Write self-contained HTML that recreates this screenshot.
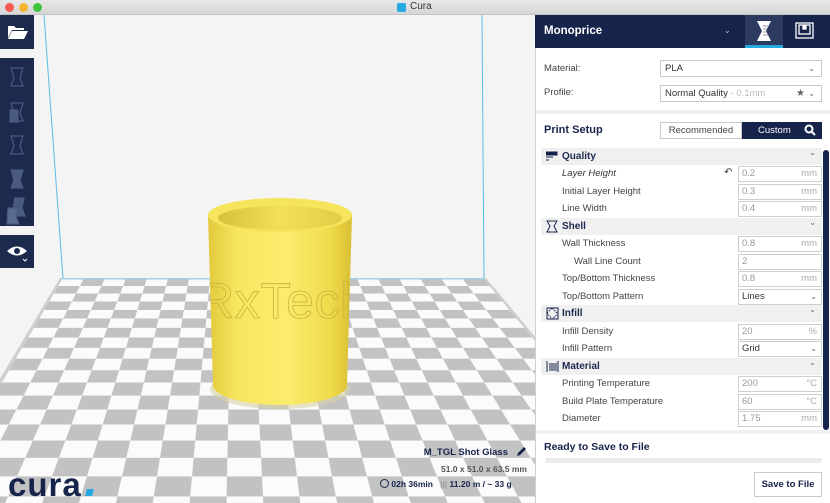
<!DOCTYPE html>
<html><head><meta charset="utf-8">
<style>
*{margin:0;padding:0;box-sizing:border-box}
html,body{width:830px;height:503px;overflow:hidden}
body{background:#f3f3f3;font-family:"Liberation Sans",sans-serif;position:relative;color:#3a3a3a}
.abs{position:absolute}
#title{left:0;top:0;width:830px;height:15px;background:linear-gradient(#e8e8e8,#d6d6d6);border-bottom:1px solid #c4c4c4}
.dot{position:absolute;top:3px;width:9px;height:9px;border-radius:50%}
#vp{left:0;top:15px;width:535px;height:488px;overflow:hidden;background:#f4f4f4;perspective:900px;perspective-origin:237px -33px}
#floor{position:absolute;left:60px;top:263px;width:426px;height:420px;transform-origin:50% 0;transform:rotateX(89.9deg);background:#cfcfcf;padding:3px}
#floor div{width:100%;height:100%;background:repeating-conic-gradient(#c2c2c2 0 25%,#fbfbfb 0 50%);background-size:42px 42px}
.tb{position:absolute;left:0;width:34px;background:#1c2a4d}
#panel{left:535px;top:15px;width:295px;height:488px;background:#fff;border-left:1px solid #d0d0d0}
.hdr{left:535px;top:15px;width:295px;height:33px;background:#16234a}
.lbl{position:absolute;font-size:9.5px;color:#444}
.box{position:absolute;border:1px solid #c9c9c9;background:#fff;font-size:9.5px;color:#333;padding-left:4px;line-height:15px}
.chev{position:absolute;right:6px;top:0;font-size:8px;color:#666}
.row{position:absolute;left:541px;width:281px;height:17px}
.sec{background:#f0f0f0}
.sec b{position:absolute;left:21px;top:3px;font-size:10px;color:#1c2a4d}
.set{position:absolute;left:21px;top:3px;font-size:9.5px;color:#444}
.in{position:absolute;left:197px;top:1px;width:84px;height:16px;border:1px solid #cfcfcf;background:#fff;font-size:9.5px;color:#999;padding-left:3px;line-height:14px}
.in span{position:absolute;right:4px;top:0;color:#aaa}
.in.dk{color:#333}
</style></head><body>
<div id="title" class="abs">
<div class="dot" style="left:5px;background:#f45a53"></div>
<div class="dot" style="left:19px;background:#f6b630"></div>
<div class="dot" style="left:33px;background:#3ec43c"></div>
<div class="abs" style="left:397px;top:3px;width:9px;height:9px;border-radius:2px;background:#26a9e0"></div>
<div class="abs" style="left:410px;top:1px;font-size:10px;color:#333">Cura</div>
</div>

<div id="vp" class="abs">
<div id="floor"><div></div></div>
<svg class="abs" style="left:0;top:0" width="535" height="488">
<line x1="44" y1="0" x2="63" y2="264" stroke="#5bbde4" stroke-width="1"/>
<line x1="482" y1="0" x2="484" y2="264" stroke="#5bbde4" stroke-width="1"/>
<line x1="63" y1="264" x2="484" y2="264" stroke="#8fd0ea" stroke-width="1"/>
<defs>
<linearGradient id="cg" x1="0" x2="1" y1="0" y2="0">
<stop offset="0" stop-color="#e3c93a"/><stop offset="0.2" stop-color="#f7e660"/><stop offset="0.55" stop-color="#fbec6c"/><stop offset="0.85" stop-color="#f0db4c"/><stop offset="1" stop-color="#d9bf32"/>
</linearGradient>
<linearGradient id="ig" x1="0" x2="1"><stop offset="0" stop-color="#d8c03a"/><stop offset="0.5" stop-color="#f3e05a"/><stop offset="1" stop-color="#e3cd45"/></linearGradient>
<clipPath id="cc"><path d="M208 200 L213 370 A67 20 0 0 0 347 370 L352 200 Z"/></clipPath>
</defs>
<ellipse cx="280" cy="374" rx="70" ry="20" fill="#d9d1a8" opacity="0.6"/>
<path d="M208 200 L213 370 A67 20 0 0 0 347 370 L352 200 Z" fill="url(#cg)"/>
<ellipse cx="280" cy="200" rx="72" ry="17" fill="#f6e45c"/>
<ellipse cx="280" cy="203" rx="62" ry="12" fill="url(#ig)"/>
<g clip-path="url(#cc)"><text x="198" y="303" font-family="Liberation Sans" font-size="50" fill="none" stroke="#c9b23c" stroke-width="0.8" textLength="170">RxTech</text></g>
</svg>
<div class="abs" style="left:8px;top:453px;font-size:33px;font-weight:bold;color:#16234a;line-height:33px;letter-spacing:1px">cura</div>
<div class="abs" style="left:86px;top:474px;width:7px;height:7px;background:#26a9e0;transform:skewX(-15deg)"></div>
<div class="abs" style="right:27px;top:432px;font-size:9.5px;font-weight:bold;color:#16234a">M_TGL Shot Glass</div>
<svg class="abs" style="left:515px;top:431px" width="12" height="12"><path d="M2 10 L3 7 L9 1 L11 3 L5 9 Z" fill="#16234a"/></svg>
<div class="abs" style="right:8px;top:449px;font-size:8.5px;font-weight:bold;color:#555">51.0 x 51.0 x 63.5 mm</div>
<div class="abs" style="left:380px;top:464px;font-size:8.5px;font-weight:bold;color:#16234a;white-space:nowrap">
<span style="display:inline-block;width:9px;height:9px;border:1px solid #16234a;border-radius:50%;vertical-align:-1px"></span> 02h 36min &nbsp; <span style="color:#999">|||</span> 11.20 m / ~ 33 g</div>
</div>

<div class="tb" style="top:15px;height:34px"></div>
<svg class="abs" style="left:7px;top:24px" width="22" height="16"><path d="M1 2 H7 L9 4 H17 V6 H5 L1 14 Z" fill="#fff"/><path d="M5 7 H21 L17 15 H1 Z" fill="#fff"/></svg>
<div class="tb" style="top:58px;height:168px"></div>
<svg class="abs" style="left:0;top:58px" width="34" height="168" fill="none" stroke="#4a5a80" stroke-width="1.2">
<path d="M11 10 H23 L20 20 L23 28 H11 L14 20 Z"/>
<path d="M11 45 H23 L20 55 L23 63 H11 L14 55 Z"/><rect x="10" y="52" width="8" height="12" fill="#4a5a80"/>
<path d="M11 78 H23 L20 88 L23 96 H11 L14 88 Z"/>
<path d="M11 112 H23 L20 122 L23 130 H11 L14 122 Z" fill="#4a5a80"/>
<path d="M14 140 H24 L22 150 L25 158 H12" fill="#4a5a80"/><path d="M8 150 H18 L16 158 L19 166 H7 Z" fill="#5a6a90"/>
</svg>
<div class="tb" style="top:235px;height:33px"></div>
<svg class="abs" style="left:6px;top:244px" width="24" height="20"><path d="M1 7 Q11 -2 21 7 Q11 16 1 7 Z" fill="#fff"/><circle cx="11" cy="7" r="3" fill="#1c2a4d"/><path d="M17 15 L19 17 L21 15" stroke="#fff" fill="none"/></svg>

<div id="panel" class="abs"></div>
<div class="hdr abs"></div>
<div class="abs" style="left:544px;top:25px;font-size:11.5px;font-weight:bold;color:#fff">Monoprice</div>
<div class="abs" style="left:724px;top:26px;font-size:8px;color:#ccc">⌄</div>
<div class="abs" style="left:745px;top:15px;width:38px;height:33px;background:#2e3b60;border-bottom:3px solid #26a9e0"></div>
<svg class="abs" style="left:755px;top:20px" width="18" height="22"><path d="M2 1 H16 L11 11 L16 21 H2 L7 11 Z" fill="#fff"/><path d="M8 6 H13 M8 9 H12 M8 12 H12 M8 15 H13" stroke="#999" stroke-width="1"/></svg>
<svg class="abs" style="left:794px;top:21px" width="22" height="20" fill="none" stroke="#fff" stroke-width="1.3"><rect x="2" y="2" width="17" height="15"/><rect x="5" y="4" width="11" height="9"/><rect x="9" y="5" width="3" height="3" fill="#fff"/></svg>

<div class="lbl" style="left:544px;top:63px">Material:</div>
<div class="box" style="left:660px;top:60px;width:162px;height:17px">PLA<span class="chev">⌄</span></div>
<div class="lbl" style="left:544px;top:87px">Profile:</div>
<div class="box" style="left:660px;top:85px;width:162px;height:17px">Normal Quality <span style="color:#bbb">- 0.1mm</span><span class="chev" style="right:16px;font-size:10px">★</span><span class="chev">⌄</span></div>
<div class="abs" style="left:536px;top:110px;width:294px;height:4px;background:#f0f0f0"></div>
<div class="abs" style="left:544px;top:124px;font-size:11px;font-weight:bold;color:#16234a">Print Setup</div>
<div class="abs" style="left:660px;top:122px;width:82px;height:17px;border:1px solid #c9c9c9;font-size:9.5px;text-align:center;line-height:15px;color:#444">Recommended</div>
<div class="abs" style="left:742px;top:122px;width:80px;height:17px;background:#16234a;font-size:9.5px;line-height:17px;color:#fff;padding-left:16px">Custom</div>
<svg class="abs" style="left:804px;top:124px" width="12" height="12"><circle cx="5" cy="5" r="3.5" stroke="#fff" stroke-width="2" fill="none"/><path d="M7.5 7.5 L11 11" stroke="#fff" stroke-width="2"/></svg>

<div class="row sec" style="top:148px"><svg class="abs" style="left:5px;top:3px" width="12" height="11"><path d="M0 1 H11 V4 H0 Z M0 6 H7 M0 9 H3" stroke="#16234a" fill="#16234a"/></svg><b>Quality</b><span class="chev">⌄</span></div>
<div class="row" style="top:165px"><span class="set" style="font-style:italic;color:#333">Layer Height</span><span class="abs" style="left:183px;top:2px;font-size:10px">↶</span><div class="in">0.2<span>mm</span></div></div>
<div class="row" style="top:183px"><span class="set">Initial Layer Height</span><div class="in">0.3<span>mm</span></div></div>
<div class="row" style="top:200px"><span class="set">Line Width</span><div class="in">0.4<span>mm</span></div></div>
<div class="row sec" style="top:218px"><svg class="abs" style="left:5px;top:2px" width="12" height="13"><path d="M1 1 H11 L8 6 L11 12 H1 L4 6 Z" stroke="#16234a" fill="none"/></svg><b>Shell</b><span class="chev">⌄</span></div>
<div class="row" style="top:235px"><span class="set">Wall Thickness</span><div class="in">0.8<span>mm</span></div></div>
<div class="row" style="top:253px"><span class="set" style="left:33px">Wall Line Count</span><div class="in">2</div></div>
<div class="row" style="top:270px"><span class="set">Top/Bottom Thickness</span><div class="in">0.8<span>mm</span></div></div>
<div class="row" style="top:288px"><span class="set">Top/Bottom Pattern</span><div class="in dk">Lines<span style="color:#666;font-size:8px">⌄</span></div></div>
<div class="row sec" style="top:305px"><svg class="abs" style="left:5px;top:2px" width="13" height="13"><rect x="1" y="1" width="11" height="11" stroke="#16234a" fill="none"/><path d="M1 6 L6 1 L12 7 L6 12 Z" stroke="#16234a" fill="none" stroke-dasharray="1.5 1"/></svg><b>Infill</b><span class="chev">⌄</span></div>
<div class="row" style="top:323px"><span class="set">Infill Density</span><div class="in">20<span>%</span></div></div>
<div class="row" style="top:340px"><span class="set">Infill Pattern</span><div class="in dk">Grid<span style="color:#666;font-size:8px">⌄</span></div></div>
<div class="row sec" style="top:358px"><svg class="abs" style="left:5px;top:2px" width="13" height="13"><path d="M1 1 V12 M4 3 V11 M6 3 V11 M8 3 V11 M10 3 V11 M12 1 V12" stroke="#16234a"/></svg><b>Material</b><span class="chev">⌄</span></div>
<div class="row" style="top:375px"><span class="set">Printing Temperature</span><div class="in">200<span>°C</span></div></div>
<div class="row" style="top:393px"><span class="set">Build Plate Temperature</span><div class="in">60<span>°C</span></div></div>
<div class="row" style="top:410px"><span class="set">Diameter</span><div class="in">1.75<span>mm</span></div></div>
<div class="abs" style="left:823px;top:150px;width:6px;height:280px;border-radius:3px;background:#16234a"></div>

<div class="abs" style="left:536px;top:430px;width:294px;height:4px;background:#f2f2f2"></div>
<div class="abs" style="left:544px;top:441px;font-size:10.5px;font-weight:bold;color:#16234a">Ready to Save to File</div>
<div class="abs" style="left:545px;top:458px;width:277px;height:5px;border-radius:3px;background:#ececec"></div>
<div class="abs" style="left:754px;top:472px;width:68px;height:25px;border:1px solid #c9c9c9;font-size:9.5px;font-weight:bold;color:#16234a;text-align:center;line-height:23px">Save to File</div>
</body></html>
